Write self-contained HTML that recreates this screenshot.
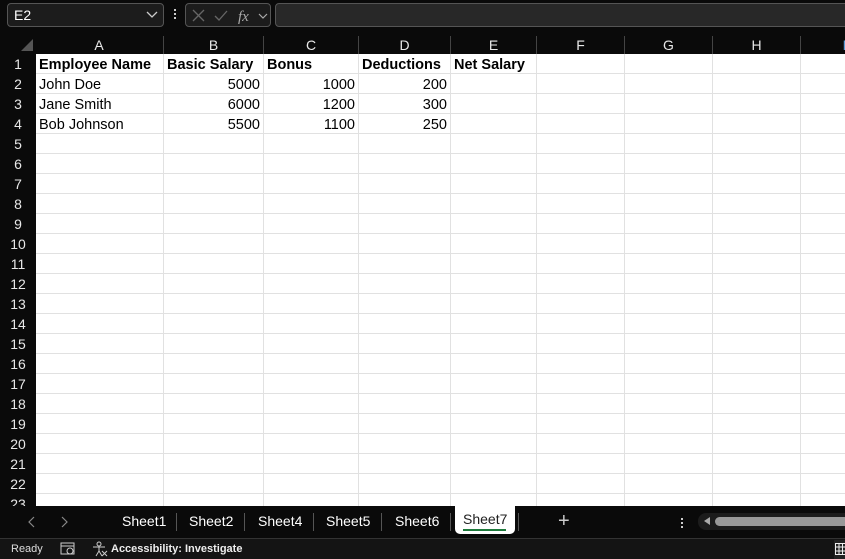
<!DOCTYPE html>
<html><head><meta charset="utf-8"><style>
*{margin:0;padding:0;box-sizing:border-box}
body{width:845px;height:559px;overflow:hidden;background:#0a0a0a;font-family:"Liberation Sans",sans-serif;position:relative}
.a{position:absolute}
.grid{left:36px;top:54px;width:809px;height:452px;background:#fff;
background-image:repeating-linear-gradient(to bottom,transparent 0,transparent 19px,#e1e1e1 19px,#e1e1e1 20px)}
.vl{position:absolute;top:0;width:1px;height:452px;background:#e1e1e1}
.ch{position:absolute;top:36px;height:18px;color:#e8e8e8;font-size:14px;text-align:center;line-height:19px;border-right:1px solid #444}
.rh{position:absolute;left:0;width:36px;height:20px;color:#e8e8e8;font-size:14px;text-align:center;line-height:20px}
.c{position:absolute;font-size:14.5px;color:#000;line-height:20px;height:20px;white-space:nowrap;padding-top:1px}
.b{font-weight:bold}
.r{text-align:right}
.tab{position:absolute;top:513px;color:#fff;font-size:14px}
.sep{position:absolute;top:513px;width:1px;height:18px;background:#555}
</style></head><body>
<div class="a" style="left:7px;top:3px;width:157px;height:24px;border:1px solid #555;border-radius:4px;background:#1c1c1c"></div>
<div class="a" style="left:14px;top:7px;color:#fff;font-size:14px">E2</div>
<svg class="a" style="left:146px;top:11px" width="12" height="8"><path d="M1 1l5 5 5-5" stroke="#ccc" fill="none" stroke-width="1.3"/></svg>
<div class="a" style="left:174px;top:9px;width:2px;height:2px;background:#ccc;box-shadow:0 4px #ccc,0 8px #ccc"></div>
<div class="a" style="left:185px;top:3px;width:86px;height:24px;border:1px solid #555;border-radius:4px;background:#1c1c1c"></div>
<svg class="a" style="left:190px;top:8px" width="80" height="16"><path d="M3 2l11 11M14 2L3 13" stroke="#666" stroke-width="1.3"/><path d="M25 8l4 4 8-9" stroke="#666" fill="none" stroke-width="1.3"/><text x="48" y="13" font-family="Liberation Serif" font-style="italic" font-size="15" fill="#aaa">fx</text><path d="M69 6l4 4 4-4" stroke="#aaa" fill="none" stroke-width="1.2"/></svg>
<div class="a" style="left:275px;top:3px;width:580px;height:24px;border:1px solid #555;border-radius:4px;background:#282828"></div>
<svg class="a" style="left:20px;top:38px" width="14" height="14"><path d="M13 1V13H1Z" fill="#555"/></svg>
<div class="ch" style="left:35px;width:129px">A</div>
<div class="ch" style="left:164px;width:100px">B</div>
<div class="ch" style="left:264px;width:95px">C</div>
<div class="ch" style="left:359px;width:92px">D</div>
<div class="ch" style="left:451px;width:86px">E</div>
<div class="ch" style="left:537px;width:88px">F</div>
<div class="ch" style="left:625px;width:88px">G</div>
<div class="ch" style="left:713px;width:88px">H</div>
<div class="ch" style="left:801px;width:88px;color:#5b9bd5">I</div>
<div class="grid a">
<div class="vl" style="left:127px"></div><div class="vl" style="left:227px"></div><div class="vl" style="left:322px"></div><div class="vl" style="left:414px"></div><div class="vl" style="left:500px"></div><div class="vl" style="left:588px"></div><div class="vl" style="left:676px"></div><div class="vl" style="left:764px"></div>
</div>
<div class="rh" style="top:54px">1</div><div class="rh" style="top:74px">2</div><div class="rh" style="top:94px">3</div><div class="rh" style="top:114px">4</div><div class="rh" style="top:134px">5</div><div class="rh" style="top:154px">6</div><div class="rh" style="top:174px">7</div><div class="rh" style="top:194px">8</div><div class="rh" style="top:214px">9</div><div class="rh" style="top:234px">10</div><div class="rh" style="top:254px">11</div><div class="rh" style="top:274px">12</div><div class="rh" style="top:294px">13</div><div class="rh" style="top:314px">14</div><div class="rh" style="top:334px">15</div><div class="rh" style="top:354px">16</div><div class="rh" style="top:374px">17</div><div class="rh" style="top:394px">18</div><div class="rh" style="top:414px">19</div><div class="rh" style="top:434px">20</div><div class="rh" style="top:454px">21</div><div class="rh" style="top:474px">22</div><div class="rh" style="top:494px;height:12px;overflow:hidden">23</div>
<div class="c b" style="left:39px;top:54px">Employee Name</div>
<div class="c b" style="left:167px;top:54px">Basic Salary</div>
<div class="c b" style="left:267px;top:54px">Bonus</div>
<div class="c b" style="left:362px;top:54px">Deductions</div>
<div class="c b" style="left:454px;top:54px">Net Salary</div>
<div class="c" style="left:39px;top:74px">John Doe</div>
<div class="c" style="left:39px;top:94px">Jane Smith</div>
<div class="c" style="left:39px;top:114px">Bob Johnson</div>
<div class="c r" style="left:164px;width:96px;top:74px">5000</div>
<div class="c r" style="left:164px;width:96px;top:94px">6000</div>
<div class="c r" style="left:164px;width:96px;top:114px">5500</div>
<div class="c r" style="left:264px;width:91px;top:74px">1000</div>
<div class="c r" style="left:264px;width:91px;top:94px">1200</div>
<div class="c r" style="left:264px;width:91px;top:114px">1100</div>
<div class="c r" style="left:359px;width:88px;top:74px">200</div>
<div class="c r" style="left:359px;width:88px;top:94px">300</div>
<div class="c r" style="left:359px;width:88px;top:114px">250</div>
<div class="a" style="left:0;top:506px;width:845px;height:32px;background:#0a0a0a"></div>
<svg class="a" style="left:26px;top:515px" width="44" height="14"><path d="M8 2l-5 5 5 5M36 2l5 5-5 5" stroke="#888" fill="none" stroke-width="1.2"/></svg>
<div class="tab" style="left:122px">Sheet1</div><div class="sep" style="left:176px"></div>
<div class="tab" style="left:189px">Sheet2</div><div class="sep" style="left:244px"></div>
<div class="tab" style="left:258px">Sheet4</div><div class="sep" style="left:313px"></div>
<div class="tab" style="left:326px">Sheet5</div><div class="sep" style="left:381px"></div>
<div class="tab" style="left:395px">Sheet6</div><div class="sep" style="left:450px"></div>
<div class="a" style="left:455px;top:506px;width:60px;height:28px;background:#fff;border-radius:0 0 5px 5px"></div>
<div class="tab" style="left:463px;top:511px;color:#222">Sheet7</div>
<div class="a" style="left:463px;top:529px;width:43px;height:2px;background:#1e7a3c"></div>
<div class="sep" style="left:518px"></div>
<div class="a" style="left:558px;top:510px;color:#ccc;font-size:20px;font-weight:300">+</div>
<div class="a" style="left:681px;top:518px;width:2px;height:2px;background:#ccc;box-shadow:0 4px #ccc,0 8px #ccc"></div>
<div class="a" style="left:698px;top:513px;width:160px;height:17px;background:#1c1c1c;border-radius:8px"></div>
<svg class="a" style="left:702px;top:516px" width="10" height="10"><path d="M8 1v8L2 5z" fill="#aaa"/></svg>
<div class="a" style="left:715px;top:517px;width:140px;height:9px;background:#999;border-radius:5px"></div>
<div class="a" style="left:0;top:538px;width:845px;height:21px;background:#141414;border-top:1px solid #333"></div>
<div class="a" style="left:11px;top:543px;color:#ddd;font-size:11px">Ready</div>
<svg class="a" style="left:60px;top:542px" width="16" height="14"><rect x="1" y="1" width="13" height="11" fill="none" stroke="#ccc"/><path d="M1 4h13" stroke="#ccc"/><circle cx="10" cy="9" r="3" fill="none" stroke="#ccc"/></svg>
<svg class="a" style="left:92px;top:541px" width="16" height="16"><circle cx="7" cy="3" r="2" fill="none" stroke="#ccc"/><path d="M1 6h12M7 6v4l-3 5M7 10l3 5M10 10l5 5M15 10l-5 5" stroke="#ccc" fill="none"/></svg>
<div class="a" style="left:111px;top:543px;color:#eee;font-size:11px;font-weight:bold">Accessibility: Investigate</div>
<div class="a" style="left:834px;top:540px;width:11px;height:19px;background:#222"></div>
<svg class="a" style="left:835px;top:542px" width="10" height="14"><path d="M0.5 1v12M4 1v12M7.5 1v12M0 1.5h10M0 5h10M0 9h10M0 12.5h10" stroke="#eee"/></svg>
</body></html>
